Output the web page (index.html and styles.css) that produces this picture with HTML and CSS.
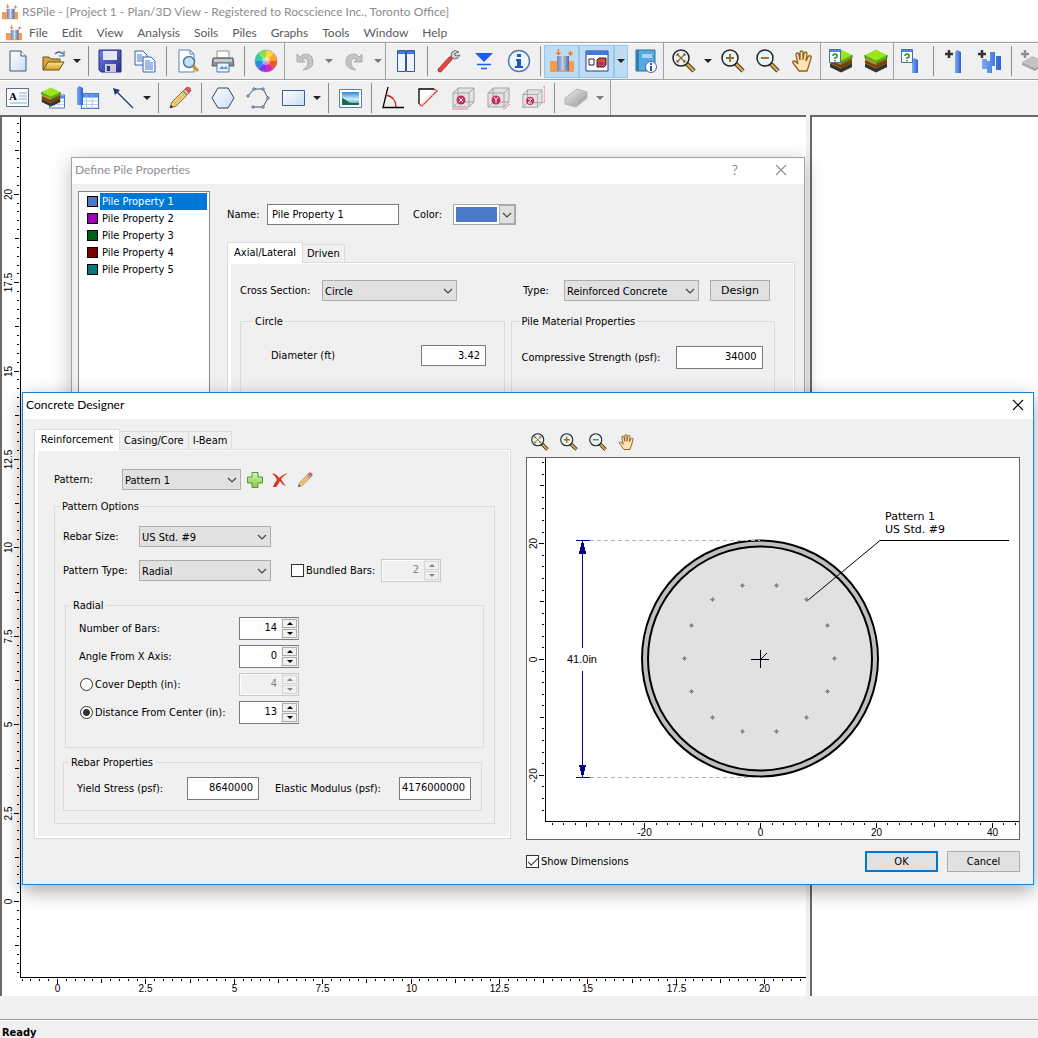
FILE: index.html
```html
<!DOCTYPE html>
<html lang="en">
<head>
<meta charset="utf-8">
<title>RSPile</title>
<link rel="stylesheet" href="styles.css">
</head>
<body>
<svg class="defs" aria-hidden="true">
  <defs>
    <linearGradient id="g-paper" x1="0" y1="0" x2="1" y2="1"><stop offset="0" stop-color="#fff"/><stop offset="1" stop-color="#c9dcf2"/></linearGradient>
    <linearGradient id="g-folder" x1="0" y1="0" x2="0" y2="1"><stop offset="0" stop-color="#fbe59a"/><stop offset="1" stop-color="#d59a1c"/></linearGradient>
    <linearGradient id="g-blue" x1="0" y1="0" x2="1" y2="1"><stop offset="0" stop-color="#6f7fe8"/><stop offset="1" stop-color="#2b2d8c"/></linearGradient>
    <linearGradient id="g-pile" x1="0" y1="0" x2="1" y2="0"><stop offset="0" stop-color="#6b86bb"/><stop offset=".5" stop-color="#b9c6e0"/><stop offset="1" stop-color="#4d689f"/></linearGradient>
    <linearGradient id="g-bar" x1="0" y1="0" x2="1" y2="0"><stop offset="0" stop-color="#7eaaf5"/><stop offset="1" stop-color="#2c62d0"/></linearGradient>
    <linearGradient id="g-sky" x1="0" y1="0" x2="0" y2="1"><stop offset="0" stop-color="#2a86d8"/><stop offset=".55" stop-color="#cdeefa"/><stop offset="1" stop-color="#2b9a9a"/></linearGradient>
    <linearGradient id="g-green" x1="0" y1="0" x2="0" y2="1"><stop offset="0" stop-color="#d8f0bd"/><stop offset="1" stop-color="#8cc63e"/></linearGradient>
    <linearGradient id="g-grey" x1="0" y1="0" x2="1" y2="1"><stop offset="0" stop-color="#f2f2f2"/><stop offset="1" stop-color="#8e8e8e"/></linearGradient>

    <symbol id="i-logo" viewBox="0 0 24 24">
      <path d="M0 12h7v9h12v-9h5v11H0z" fill="#f79a4b"/>
      <path d="M7 7h5v15H7zM13 7h6v15h-6z" fill="url(#g-pile)"/>
      <path d="M8.500 0v5M23 4.500h-3" stroke="#ef7d22" stroke-width="1.300"/><path d="M5.500 3.500h6l-3 3zM18 4.500l3-3v6z" fill="#ef7d22"/>
    </symbol>
    <symbol id="i-new" viewBox="0 0 24 24"><path d="M4 2h11l5 5v15H4z" fill="url(#g-paper)" stroke="#3f5878"/><path d="M15 2v5h5" fill="#fff" stroke="#3f5878"/></symbol>
    <symbol id="i-open" viewBox="0 0 24 24">
      <path d="M2 21V8h6l2 2h9v3" fill="#d8a63c" stroke="#6b4f14"/><path d="M2 21l5-8h16l-5 8z" fill="url(#g-folder)" stroke="#6b4f14"/>
      <path d="M14 5q4-4 8 0M23 2v5h-5" fill="none" stroke="#4b6a92" stroke-width="1.200"/>
    </symbol>
    <symbol id="i-save" viewBox="0 0 24 24"><path d="M1 1h22v22H3l-2-2z" fill="url(#g-blue)" stroke="#24307a"/><path d="M5 2h14v9H5z" fill="#e3e8f8"/><path d="M7 15h11v8H7z" fill="#c4c9dd"/><path d="M9 17h3v5H9z" fill="#2a2f80"/></symbol>
    <symbol id="i-copy" viewBox="0 0 24 24">
      <g stroke="#3d67a8" fill="#f4f8ff"><path d="M2 2h8l4 4v10H2z"/><path d="M10 8h8l4 4v11H10z"/></g>
      <path d="M4 6h5M4 8h7M4 10h6M4 12h6M12 12h5M12 14h8M12 16h8M12 18h8M12 20h8" stroke="#4b7bd0"/>
    </symbol>
    <symbol id="i-preview" viewBox="0 0 24 24">
      <path d="M3 1h11l4 4v18H3z" fill="#fdfeff" stroke="#5b83b8"/><path d="M14 1v4h4" fill="none" stroke="#5b83b8"/>
      <circle cx="13" cy="13" r="5.500" fill="#bfe2f5" stroke="#54779c" stroke-width="1.500"/><path d="M17 17l5 5" stroke="#c9952e" stroke-width="3"/>
    </symbol>
    <symbol id="i-print" viewBox="0 0 24 24">
      <path d="M6 2h12v7H6z" fill="#fff" stroke="#8f8f8f"/><path d="M2 9h20l1 8H1z" fill="#8f8f8f" stroke="#5d5d5d"/><path d="M3 10h18v3H3z" fill="#c9c9c9"/>
      <path d="M6 14h12v9H6z" fill="#eaf4ff" stroke="#4c79b5"/><path d="M8 20l3-3 2 2 2-2 2 3z" fill="#4e9bd8"/>
    </symbol>
    <symbol id="i-wheel" viewBox="0 0 24 24">
      <g><path d="M12 12L12 1A11 11 0 0 1 19.800 4.200z" fill="#ffd84a"/><path d="M12 12L19.800 4.200A11 11 0 0 1 23 12z" fill="#ffa630"/><path d="M12 12L23 12A11 11 0 0 1 19.800 19.800z" fill="#f4512c"/><path d="M12 12L19.800 19.800A11 11 0 0 1 12 23z" fill="#d22bb0"/><path d="M12 12L12 23A11 11 0 0 1 4.200 19.800z" fill="#7a3cf0"/><path d="M12 12L4.200 19.800A11 11 0 0 1 1 12z" fill="#2e86f0"/><path d="M12 12L1 12A11 11 0 0 1 4.200 4.200z" fill="#2ccfa6"/><path d="M12 12L4.200 4.200A11 11 0 0 1 12 1z" fill="#8be04a"/></g>
      <circle cx="12" cy="12" r="4" fill="#fff" opacity=".45"/><circle cx="12" cy="12" r="11" fill="none" stroke="#8a8a8a" opacity=".5"/>
    </symbol>
    <symbol id="i-undo" viewBox="0 0 24 24"><path d="M4 5v8h8l-3-3q6-2 6 4 0 4-5 7 10-1 10-8 0-8-8-8-3 0-5 3z" fill="#c4c4c4" stroke="#adadad"/></symbol>
    <symbol id="i-redo" viewBox="0 0 24 24"><path d="M20 5v8h-8l3-3q-6-2-6 4 0 4 5 7-10-1-10-8 0-8 8-8 3 0 5 3z" fill="#c4c4c4" stroke="#adadad"/></symbol>
    <symbol id="i-panes" viewBox="0 0 24 24"><path d="M3.500 1.500h8v21h-8zM12.500 1.500h8v21h-8z" fill="#eef4fd" stroke="#3a588f"/><path d="M4 2h7v3H4zM13 2h7v3h-7z" fill="#3f78e0"/></symbol>
    <symbol id="i-wrench" viewBox="0 0 24 24"><path d="M13 10l5-5" stroke="#8b8b8b" stroke-width="3"/><path d="M22 3q-4-3-7 0-2 3 0 6 3 2 6 0 1-1 2-3l-4 1-2-2z" fill="#d0d0d0" stroke="#6e6e6e"/><path d="M3 21L13 10" stroke="#b02a2a" stroke-width="4.500" stroke-linecap="round"/><path d="M3 21L13 10" stroke="#e8483f" stroke-width="3" stroke-linecap="round"/></symbol>
    <symbol id="i-level" viewBox="0 0 24 24"><path d="M3 4h18l-9 9z" fill="#1c5cf0"/><path d="M5 15.500h14M9 19.500h6" stroke="#1c5ce0" stroke-width="1.300"/></symbol>
    <symbol id="i-info" viewBox="0 0 24 24"><circle cx="12" cy="12" r="10.500" fill="#eef6ff" stroke="#5577b0" stroke-width="1.500"/><path d="M10 5h4v3h-4zM9 10h5v7h2v2H8v-2h2v-5H9z" fill="#2256b8"/></symbol>
    <symbol id="i-view" viewBox="0 0 24 24"><path d="M1 2h22v20H1z" fill="#fff" stroke="#23407e"/><path d="M1 2h22v4H1z" fill="#3f78e0"/><path d="M4 10h5v6H4z" fill="#fff" stroke="#222"/><path d="M12 11l2-2h7v7l-2 2h-7z" fill="#e04a2a" stroke="#222"/><path d="M14 13h4v3h-4z" fill="#7b2be0"/></symbol>
    <symbol id="i-book" viewBox="0 0 24 24"><path d="M2 1h19v21H2z" fill="#55abdf" stroke="#2b6f9e"/><path d="M2 1h3v21H2z" fill="#2f7fb5"/><path d="M8 5h10v4H8z" fill="#a9d6f0"/><circle cx="17" cy="18" r="5.500" fill="#fff" stroke="#4a6ea5"/><path d="M16 14h2v2h-2zM16 17h2v5h-2z" fill="#2256b8"/></symbol>
    <symbol id="i-lens" viewBox="0 0 24 24"><path d="M14 14l8 8" stroke="#1f1f1f" stroke-width="4.500"/><path d="M15 15l7 7" stroke="#d9a94a" stroke-width="2.500"/><circle cx="9" cy="9" r="8" fill="#e6f6f8" stroke="#222" stroke-width="1.500"/></symbol>
    <symbol id="i-zoom-in" viewBox="0 0 24 24"><use href="#i-lens"/><path d="M5 9h8M9 5v8" stroke="#9a6a1e" stroke-width="1.800"/></symbol>
    <symbol id="i-zoom-out" viewBox="0 0 24 24"><use href="#i-lens"/><path d="M5 9h8" stroke="#9a6a1e" stroke-width="1.800"/></symbol>
    <symbol id="i-zoom-fit" viewBox="0 0 24 24"><use href="#i-lens"/><path d="M5 5l8 8M13 5l-8 8" stroke="#9a6a1e" stroke-width="1.300"/><path d="M5 7V5h2M11 5h2v2M13 11v2h-2M7 13H5v-2" fill="none" stroke="#7c5415"/></symbol>
    <symbol id="i-hand" viewBox="0 0 24 24"><path d="M8 22q-3-4-6-8-1-2 1-2 2 0 4 3L5 6q0-2 1-2 2 0 2 2l1 5V4q0-2 2-2 1 0 1 2v7l1-6q0-2 2-2 1 0 1 2l-1 7 2-4q1-2 2-1 2 0 1 2l-2 7-2 6z" fill="#fbe2b8" stroke="#94611c" stroke-width="1.300"/></symbol>
    <symbol id="i-soil" viewBox="0 0 24 24">
      <path d="M1 6l11 5v12L1 18z" fill="#c58f2e"/><path d="M12 11l11-5v12l-11 5z" fill="#8e5d14"/>
      <path d="M1 11l11 5 11-5v3l-11 5-11-5z" fill="#6e450d"/><path d="M1 14.500l11 5 11-5V18l-11 5.500L1 18z" fill="#333"/>
      <path d="M1 6v3l11 5 11-5V6l-11 5z" fill="#57b21a"/><path d="M12 .5L1 6l11 5.500L23 6z" fill="#9be61a"/><path d="M1 9v-3M23 9V6" stroke="#2f7a10"/>
    </symbol>
    <symbol id="i-help" viewBox="0 0 12 14"><path d="M.5.5h11v13H.5z" fill="#fff" stroke="#4a6ea5"/><path d="M1 1h10v2H1z" fill="#4b86ea"/><path d="M4 7q0-2 2-2t2 2-2 2v1M6 11v1.500" fill="none" stroke="#0e8f2a" stroke-width="1.500"/></symbol>
    <symbol id="i-soil-help" viewBox="0 0 24 24"><use href="#i-soil"/><use href="#i-help" width="12" height="14"/></symbol>
    <symbol id="i-pile-help" viewBox="0 0 24 24"><path d="M12 11l2-2 4 2v13h-6z" fill="url(#g-bar)"/><use href="#i-help" x="1" width="12" height="14"/></symbol>
    <symbol id="i-pile-add" viewBox="0 0 24 24"><path d="M2 5h8M6 1v8" stroke="#333" stroke-width="2.500"/><path d="M12 3l2-2 4 2v21h-6z" fill="url(#g-bar)"/></symbol>
    <symbol id="i-piles-add" viewBox="0 0 24 24"><path d="M0 5h8M4 1v8" stroke="#333" stroke-width="2.500"/><path d="M4 10h5v10H4zM9 12h5v12H9zM12 3h5v14h-5zM18 7h5v14h-5z" fill="url(#g-bar)"/></symbol>
    <symbol id="i-slab" viewBox="0 0 24 24"><path d="M1 13l10-6 13 5-10 7z" fill="#c4c4c4"/><path d="M1 13v3l13 6 10-7v-3l-10 7z" fill="#a8a8a8"/><path d="M0 5h8M4 1v8" stroke="#8f8f8f" stroke-width="2.500"/></symbol>

    <symbol id="i-text" viewBox="0 0 24 24"><path d="M.5 2.500h22v18H.5z" fill="#f9fbff" stroke="#5b6d8c"/><text x="3" y="14" class="icon-letter">A</text><path d="M13 7h8M13 10h8M13 13h8M4 17h17" stroke="#8fa9cf"/></symbol>
    <symbol id="i-grid" viewBox="0 0 16 14"><path d="M.5.5h15v13H.5z" fill="#fff" stroke="#4a78c4"/><path d="M1 1h14v3H1z" fill="#4f8df0"/><path d="M1 7h14M1 10h14M5 1v13M10 1v13" stroke="#9dbce8" stroke-width=".7"/></symbol>
    <symbol id="i-soil-grid" viewBox="0 0 24 24"><use href="#i-grid" x="8" y="8" width="16" height="15"/><use href="#i-soil" y="1" width="20" height="20"/></symbol>
    <symbol id="i-pile-grid" viewBox="0 0 24 24"><use href="#i-grid" x="4" y="7" width="20" height="16"/><path d="M1 2l2-2 4 2v17H1z" fill="url(#g-bar)"/></symbol>
    <symbol id="i-arrow" viewBox="0 0 24 24"><path d="M4 4l18 18" stroke="#1f3a6c" stroke-width="1.300"/><path d="M2 2l7 2-5 5z" fill="#1f3a6c"/></symbol>
    <symbol id="i-pencil" viewBox="0 0 24 24"><path d="M2 22l2-6L17 3l4 4L8 20z" fill="#f6cf7c" stroke="#8a6a34"/><path d="M6 18L18 6" stroke="#d9a94e"/><path d="M17 3l2-2q4 0 4 4l-2 2z" fill="#d9575c" stroke="#9a7070"/><path d="M15 5l4 4" stroke="#8fa2a8" stroke-width="2"/><path d="M2 22l1-3 2 2z" fill="#222"/></symbol>
    <symbol id="i-hex" viewBox="0 0 24 24"><path d="M7 2h10l6 10-6 10H7L1 12z" fill="url(#g-paper)" stroke="#33465f"/></symbol>
    <symbol id="i-poly" viewBox="0 0 24 24"><path d="M2 10L8 3h9l5 9-5 9H7" fill="none" stroke="#3c5575"/><g fill="#fff" stroke="#3c5575" stroke-width=".8"><path d="M1 9h2v2H1zM7 2h2v2H7zM16 2h2v2h-2zM21 11h2v2h-2zM16 20h2v2h-2zM6 20h2v2H6z"/></g></symbol>
    <symbol id="i-rect" viewBox="0 0 24 24"><path d="M1.500 4.500h22v15h-22z" fill="url(#g-paper)" stroke="#3c5f8c"/></symbol>
    <symbol id="i-image" viewBox="0 0 24 24"><path d="M1.500 3.500h22v18h-22z" fill="#fff" stroke="#5b7fae"/><path d="M4 6h17v13H4z" fill="url(#g-sky)"/><path d="M4 12l4 2 4 3 9 0v2H4z" fill="#176a52"/></symbol>
    <symbol id="i-angle" viewBox="0 0 24 24"><path d="M7 1L2 21.500h21" fill="none" stroke="#000" stroke-width="1.300"/><path d="M5 9q10 2 10 12" fill="none" stroke="#e01818" stroke-width="1.300"/></symbol>
    <symbol id="i-tri" viewBox="0 0 24 24"><path d="M3 18V3h15z" fill="#fff"/><path d="M3 18V3h15" fill="none" stroke="#000" stroke-width="1.300"/><path d="M18 3l3 2L6 20l-3-2" fill="none" stroke="#e01818" stroke-width="1.300" stroke-dasharray="2 .6"/></symbol>
    <symbol id="i-cube" viewBox="0 0 24 24"><path d="M2 7l5-5h16v14l-5 5H2z" fill="#e2e2e2" stroke="#a3a3a3"/><path d="M2 7h16v14M18 7l5-5M7 2v14L2 21M7 16h16" fill="none" stroke="#a3a3a3"/><circle cx="10" cy="14" r="4.500" fill="#c72a5c"/></symbol>
    <symbol id="i-x" viewBox="0 0 24 24"><use href="#i-cube"/><path d="M8 12l4 4M12 12l-4 4" stroke="#fff"/><path d="M1 23h16" stroke="#ef7da0"/></symbol>
    <symbol id="i-y" viewBox="0 0 24 24"><use href="#i-cube"/><path d="M8 11l2 3 2-3M10 14v3" fill="none" stroke="#fff"/><path d="M17 24l7-6" stroke="#ef7da0"/></symbol>
    <symbol id="i-z" viewBox="0 0 24 24"><use href="#i-cube" y="2" width="22" height="22"/><path d="M7 13h4l-4 4h4" fill="none" stroke="#fff"/><path d="M24 1v15M22 1h3M22 16h3" stroke="#ef7da0"/></symbol>
    <symbol id="i-eraser" viewBox="0 0 24 24"><path d="M1 12L13 3l10 3v6L12 21 1 18z" fill="url(#g-grey)" stroke="#b4b4b4"/><path d="M1 12l11 3 11-9M12 15v6" fill="none" stroke="#c4c4c4"/></symbol>
    <symbol id="i-plus" viewBox="0 0 16 16"><path d="M5 .5h6V5h4.500v6H11v4.500H5V11H.5V5H5z" fill="url(#g-green)" stroke="#4c9a35"/></symbol>
    <symbol id="i-delete" viewBox="0 0 16 16"><path d="M0 2q3-2 7 4 4-4 9-5-5 3-7 6 2 4 5 7-4-1-6-5-2 4-4 6H1q1-4 4-7Q3 3 0 2z" fill="#dd3322"/></symbol>
    <symbol id="i-down" viewBox="0 0 8 4"><path d="M0 0h8L4 4z" fill="currentColor"/></symbol>
    <symbol id="i-up" viewBox="0 0 8 4"><path d="M0 4h8L4 0z" fill="currentColor"/></symbol>
    <symbol id="i-chevron" viewBox="0 0 10 6"><path d="M1 1l4 4 4-4" fill="none" stroke="#444" stroke-width="1.200"/></symbol>
    <symbol id="i-close" viewBox="0 0 12 12"><path d="M1 1l10 10M11 1L1 11" stroke="currentColor" stroke-width="1.100"/></symbol>
  </defs>
</svg>

<div class="app">
  <header class="titlebar">
    <svg class="logo"><use href="#i-logo"/></svg>
    <span>RSPile - [Project 1 - Plan/3D View - Registered to Rocscience Inc., Toronto Office]</span>
  </header>
  <nav class="menubar">
    <svg class="logo"><use href="#i-logo"/></svg>
    <a href="#file">File</a><a href="#edit">Edit</a><a href="#view">View</a><a href="#analysis">Analysis</a><a href="#soils">Soils</a><a href="#piles">Piles</a><a href="#graphs">Graphs</a><a href="#tools">Tools</a><a href="#window">Window</a><a href="#help">Help</a>
  </nav>

  <div class="toolbar">
    <div class="tools tools-first">
      <button class="tool" aria-label="New"><svg><use href="#i-new"/></svg></button>
      <button class="tool" aria-label="Open"><svg><use href="#i-open"/></svg></button>
      <button class="drop" aria-label="Recent files"><svg><use href="#i-down"/></svg></button>
      <i class="sep"></i>
      <button class="tool" aria-label="Save"><svg><use href="#i-save"/></svg></button>
      <button class="tool" aria-label="Copy"><svg><use href="#i-copy"/></svg></button>
      <i class="sep"></i>
      <button class="tool" aria-label="Print preview"><svg><use href="#i-preview"/></svg></button>
      <button class="tool" aria-label="Print"><svg><use href="#i-print"/></svg></button>
      <i class="sep"></i>
      <button class="tool" aria-label="Display options"><svg><use href="#i-wheel"/></svg></button>
    </div>
    <div class="tools">
      <button class="tool" aria-label="Undo"><svg><use href="#i-undo"/></svg></button>
      <button class="drop dim" aria-label="Undo list"><svg><use href="#i-down"/></svg></button>
      <button class="tool" aria-label="Redo"><svg><use href="#i-redo"/></svg></button>
      <button class="drop dim" aria-label="Redo list"><svg><use href="#i-down"/></svg></button>
    </div>
    <div class="tools">
      <button class="tool" aria-label="Tile"><svg><use href="#i-panes"/></svg></button>
      <i class="sep"></i>
      <button class="tool" aria-label="Settings"><svg><use href="#i-wrench"/></svg></button>
      <button class="tool" aria-label="Groundwater"><svg><use href="#i-level"/></svg></button>
      <button class="tool" aria-label="Info"><svg><use href="#i-info"/></svg></button>
      <i class="sep"></i>
      <button class="tool on" aria-label="Piles mode"><svg><use href="#i-logo"/></svg></button>
      <button class="tool on" aria-label="3D view"><svg><use href="#i-view"/></svg></button>
      <button class="drop on" aria-label="View list"><svg><use href="#i-down"/></svg></button>
      <button class="tool" aria-label="Report"><svg><use href="#i-book"/></svg></button>
    </div>
    <div class="tools">
      <button class="tool" aria-label="Zoom all"><svg><use href="#i-zoom-fit"/></svg></button>
      <button class="drop" aria-label="Zoom list"><svg><use href="#i-down"/></svg></button>
      <button class="tool" aria-label="Zoom in"><svg><use href="#i-zoom-in"/></svg></button>
      <button class="tool" aria-label="Zoom out"><svg><use href="#i-zoom-out"/></svg></button>
      <button class="tool" aria-label="Pan"><svg><use href="#i-hand"/></svg></button>
    </div>
    <div class="tools">
      <button class="tool" aria-label="Define soils"><svg><use href="#i-soil-help"/></svg></button>
      <button class="tool" aria-label="Soil layers"><svg><use href="#i-soil"/></svg></button>
    </div>
    <div class="tools tools-last">
      <button class="tool" aria-label="Define piles"><svg><use href="#i-pile-help"/></svg></button>
      <i class="sep"></i>
      <button class="tool" aria-label="Add pile"><svg><use href="#i-pile-add"/></svg></button>
      <button class="tool" aria-label="Add pile grid"><svg><use href="#i-piles-add"/></svg></button>
      <i class="sep"></i>
      <button class="tool" aria-label="Add cap"><svg><use href="#i-slab"/></svg></button>
    </div>
  </div>

  <div class="toolbar">
    <div class="tools tools-first tools-second">
      <button class="tool" aria-label="Text box"><svg><use href="#i-text"/></svg></button>
      <button class="tool" aria-label="Soil table"><svg><use href="#i-soil-grid"/></svg></button>
      <button class="tool" aria-label="Pile table"><svg><use href="#i-pile-grid"/></svg></button>
      <button class="tool" aria-label="Arrow"><svg><use href="#i-arrow"/></svg></button>
      <button class="drop" aria-label="Line list"><svg><use href="#i-down"/></svg></button>
      <i class="sep"></i>
      <button class="tool" aria-label="Draw"><svg><use href="#i-pencil"/></svg></button>
      <i class="sep"></i>
      <button class="tool" aria-label="Polygon"><svg><use href="#i-hex"/></svg></button>
      <button class="tool" aria-label="Polyline"><svg><use href="#i-poly"/></svg></button>
      <button class="tool" aria-label="Rectangle"><svg><use href="#i-rect"/></svg></button>
      <button class="drop" aria-label="Shape list"><svg><use href="#i-down"/></svg></button>
      <i class="sep"></i>
      <button class="tool" aria-label="Image"><svg><use href="#i-image"/></svg></button>
      <i class="sep"></i>
      <button class="tool" aria-label="Angle"><svg><use href="#i-angle"/></svg></button>
      <button class="tool" aria-label="Dimension"><svg><use href="#i-tri"/></svg></button>
      <button class="tool" aria-label="X dimension"><svg><use href="#i-x"/></svg></button>
      <button class="tool" aria-label="Y dimension"><svg><use href="#i-y"/></svg></button>
      <button class="tool" aria-label="Z dimension"><svg><use href="#i-z"/></svg></button>
      <i class="sep"></i>
      <button class="tool" aria-label="Erase"><svg><use href="#i-eraser"/></svg></button>
      <button class="drop dim" aria-label="Erase list"><svg><use href="#i-down"/></svg></button>
    </div>
  </div>

  <main class="workspace">
    <section class="pane pane-plan"><svg class="plan" id="plan"></svg></section>
    <section class="pane pane-3d"></section>
  </main>
  <div class="dock"></div>
  <footer class="status">Ready</footer>

  <section class="dialog dialog-piles" aria-label="Define Pile Properties">
    <header class="dialog-title">
      <h2>Define Pile Properties</h2>
      <button class="caption-btn" aria-label="Help">?</button>
      <button class="caption-btn" aria-label="Close"><svg><use href="#i-close"/></svg></button>
    </header>
    <div class="piles-body">
      <ul class="listbox">
        <li class="selected"><i class="swatch blue"></i><span>Pile Property 1</span></li>
        <li><i class="swatch purple"></i><span>Pile Property 2</span></li>
        <li><i class="swatch green"></i><span>Pile Property 3</span></li>
        <li><i class="swatch red"></i><span>Pile Property 4</span></li>
        <li><i class="swatch teal"></i><span>Pile Property 5</span></li>
      </ul>
      <div class="piles-main">
        <div class="row name-row">
          <label class="w40" for="name">Name:</label>
          <input class="field name-field" id="name" value="Pile Property 1">
          <label class="w40" for="color">Color:</label>
          <button class="color" id="color"><span class="color-chip"></span><span class="color-drop"><svg class="chev"><use href="#i-chevron"/></svg></span></button>
        </div>
        <div class="tabs"><button class="tab active tab-axial">Axial/Lateral</button><button class="tab">Driven</button></div>
        <div class="panel piles-panel">
          <div class="row">
            <label class="w82" for="section">Cross Section:</label>
            <span class="combo c135"><select id="section"><option>Circle</option></select><svg class="chev"><use href="#i-chevron"/></svg></span>
            <label class="type-label" for="type">Type:</label>
            <span class="combo c135"><select id="type"><option>Reinforced Concrete</option></select><svg class="chev"><use href="#i-chevron"/></svg></span>
            <button class="btn design">Design</button>
          </div>
          <div class="pile-groups">
            <fieldset class="group wide"><legend>Circle</legend>
              <div class="row circle-row"><label class="w150" for="dia">Diameter (ft)</label><input class="field num short" id="dia" value="3.42"></div>
            </fieldset>
            <fieldset class="group material"><legend>Pile Material Properties</legend>
              <div class="row material-row"><label class="w154" for="strength">Compressive Strength (psf):</label><input class="field num tall w87" id="strength" value="34000"></div>
            </fieldset>
          </div>
        </div>
      </div>
    </div>
  </section>

  <section class="dialog dialog-concrete" aria-label="Concrete Designer">
    <header class="dialog-title">
      <h2>Concrete Designer</h2>
      <button class="caption-btn" aria-label="Close"><svg><use href="#i-close"/></svg></button>
    </header>
    <div class="concrete-body">
      <div class="concrete-form">
        <div class="tabs"><button class="tab active tab-reinf">Reinforcement</button><button class="tab">Casing/Core</button><button class="tab">I-Beam</button></div>
        <div class="panel concrete-panel">
          <div class="row">
            <label class="w68" for="pattern">Pattern:</label>
            <span class="combo c119"><select id="pattern"><option>Pattern 1</option></select><svg class="chev"><use href="#i-chevron"/></svg></span>
            <span class="pattern-tools">
              <button aria-label="Add"><svg><use href="#i-plus"/></svg></button>
              <button aria-label="Delete"><svg><use href="#i-delete"/></svg></button>
              <button aria-label="Rename"><svg><use href="#i-pencil"/></svg></button>
            </span>
          </div>
          <fieldset class="group options"><legend>Pattern Options</legend>
            <div class="options-rows">
              <div class="row">
                <label class="w76" for="rebar">Rebar Size:</label>
                <span class="combo c132"><select id="rebar"><option>US Std. #9</option></select><svg class="chev"><use href="#i-chevron"/></svg></span>
              </div>
              <div class="row">
                <label class="w76" for="ptype">Pattern Type:</label>
                <span class="combo c132"><select id="ptype"><option>Radial</option></select><svg class="chev"><use href="#i-chevron"/></svg></span>
                <label class="check bundled"><input type="checkbox">Bundled Bars:</label>
                <span class="spin off"><input type="number" value="2" disabled aria-label="Bundled bars"><span class="spin-btns"><button disabled aria-label="Up"><svg><use href="#i-up"/></svg></button><button disabled aria-label="Down"><svg><use href="#i-down"/></svg></button></span></span>
              </div>
            </div>
            <fieldset class="group radial"><legend>Radial</legend>
              <div class="radial-rows">
                <div class="row"><label class="w160" for="bars">Number of Bars:</label><span class="spin"><input type="number" id="bars" value="14"><span class="spin-btns"><button aria-label="Up"><svg><use href="#i-up"/></svg></button><button aria-label="Down"><svg><use href="#i-down"/></svg></button></span></span></div>
                <div class="row"><label class="w160" for="angle">Angle From X Axis:</label><span class="spin"><input type="number" id="angle" value="0"><span class="spin-btns"><button aria-label="Up"><svg><use href="#i-up"/></svg></button><button aria-label="Down"><svg><use href="#i-down"/></svg></button></span></span></div>
                <div class="row"><label class="check w160"><input type="radio" name="place">Cover Depth (in):</label><span class="spin off"><input type="number" value="4" disabled aria-label="Cover depth"><span class="spin-btns"><button disabled aria-label="Up"><svg><use href="#i-up"/></svg></button><button disabled aria-label="Down"><svg><use href="#i-down"/></svg></button></span></span></div>
                <div class="row"><label class="check w160"><input type="radio" name="place" checked>Distance From Center (in):</label><span class="spin"><input type="number" value="13" aria-label="Distance from center"><span class="spin-btns"><button aria-label="Up"><svg><use href="#i-up"/></svg></button><button aria-label="Down"><svg><use href="#i-down"/></svg></button></span></span></div>
              </div>
            </fieldset>
            <fieldset class="group rebar"><legend>Rebar Properties</legend>
              <div class="row rebar-row">
                <label class="w110" for="yield">Yield Stress (psf):</label><input class="field num tall w72" id="yield" value="8640000">
                <label class="elastic" for="elastic">Elastic Modulus (psf):</label><input class="field num tall w72" id="elastic" value="4176000000">
              </div>
            </fieldset>
          </fieldset>
        </div>
      </div>
      <div class="concrete-view">
        <div class="view-tools">
          <button aria-label="Zoom all"><svg><use href="#i-zoom-fit"/></svg></button>
          <button aria-label="Zoom in"><svg><use href="#i-zoom-in"/></svg></button>
          <button aria-label="Zoom out"><svg><use href="#i-zoom-out"/></svg></button>
          <button aria-label="Pan"><svg><use href="#i-hand"/></svg></button>
        </div>
        <div class="canvas">
          <svg id="section-view" viewBox="0 0 492 381" preserveAspectRatio="xMinYMin meet">
            <circle cx="233" cy="200.500" r="118" fill="#bfbfbf" stroke="#000" stroke-width="2"/>
            <circle cx="233" cy="200.500" r="112" fill="#e1e1e1" stroke="#000" stroke-width="2"/>
            <path d="M63 82.500h170M63 319.500h170" stroke="#b4b4b4" stroke-dasharray="4 3"/>
            <g stroke="#000080" fill="#000080" shape-rendering="crispEdges">
              <path d="M49 82.500h14M49 319.500h14M55.500 83v107M55.500 213v106"/>
              <path d="M55.500 83l3 12h-6zM55.500 319l3-12h-6z"/>
            </g>
            <text class="dim-text" x="55" y="205" text-anchor="middle">41.0in</text>
            <path d="M224 201.500h18M233.500 192v18" stroke="#000"/><path d="M234 201l6-6" stroke="#000080"/>
            <path d="M280 143L353 82.500h129" fill="none" stroke="#000"/>
            <text class="note" x="358" y="62">Pattern 1</text>
            <text class="note" x="358" y="75">US Std. #9</text>
          </svg>
        </div>
        <div class="concrete-foot">
          <label class="check"><input type="checkbox" checked>Show Dimensions</label>
          <button class="btn default">OK</button>
          <button class="btn">Cancel</button>
        </div>
      </div>
    </div>
  </section>
</div>
<script src="script.js"></script>
</body>
</html>
```
FILE: styles.css
```css
* { box-sizing: border-box; }
body {
  margin: 0;
  background: #f0f0f0;
  color: #000;
  font: 11px/13px "DejaVu Sans Condensed", "DejaVu Sans", sans-serif;
}
button, input, select { font: inherit; color: inherit; margin: 0; padding: 0; border: 0; background: none; border-radius: 0; }
svg { display: block; }
.defs { position: absolute; width: 0; height: 0; }
.icon-letter { font: bold 11px "Liberation Serif", serif; }

.app { position: relative; display: flex; flex-direction: column; height: 100vh; overflow: hidden; }
.titlebar, .menubar { display: flex; align-items: center; background: #fff; font: 12px/16px Lato, sans-serif; }
.titlebar { height: 24px; padding-left: 2px; gap: 4px; color: #8c8c8c; flex: none; }
.logo { width: 16px; height: 16px; flex: none; }
.menubar { height: 18px; padding-left: 6px; color: #5a5a5a; flex: none; }
.menubar a { color: inherit; text-decoration: none; padding: 0 7px; }

.toolbar { flex: none; display: flex; height: 36px; border-top: 1px solid #a0a0a0; box-shadow: inset 0 1px 0 #fff; overflow: hidden; }
.menubar + .toolbar { height: 37px; }
.menubar { border-bottom: 1px solid #f0f0f0; }
.tools { display: flex; align-items: center; flex: none; padding-left: 2px; border-right: 1px solid #a0a0a0; }
.tools-first { padding-left: 0; padding-right: 1px; }
.tools-second { padding-right: 3px; }
.tools-last { border-right: 0; padding-left: 0; }
.tool { width: 35px; height: 33px; display: grid; place-items: center; flex: none; }
.tool svg { width: 24px; height: 24px; overflow: visible; }
.drop { width: 14px; height: 33px; display: grid; place-items: center; flex: none; color: #222; }
.drop svg { width: 8px; height: 4px; }
.dim { color: #7a7a7a; }
.on { background: #bfdcf3; border: 1px solid #90c8f6; }
.sep { width: 8px; height: 30px; flex: none; background: linear-gradient(#8c8c8c, #8c8c8c) center / 1px 100% no-repeat; }

.workspace { flex: 1; display: flex; gap: 4px; min-height: 0; background: #f0f0f0; }
.pane { background: #fff; border-top: 2px solid #696969; border-left: 2px solid #696969; min-width: 0; }
.pane-plan { flex: 0 0 78%; max-width: 806px; }
.pane-3d { flex: 1; }
.plan { width: 100%; height: 100%; }
.axis-text { font: 10px "Liberation Sans", sans-serif; }
.dim-text { font: 11px "Liberation Sans", sans-serif; }
.note { font: 11px "DejaVu Sans", sans-serif; }
.dock { flex: none; height: 23px; }
.status { flex: none; height: 19px; padding: 6px 2px 0; border-top: 1px solid #a0a0a0; box-shadow: inset 0 1px 0 #fff; font-weight: bold; }

.dialog { position: absolute; background: #f0f0f0; }
.dialog-piles { left: 71px; top: 157px; width: 734px; border: 1px solid #a0a0a0; box-shadow: 0 4px 18px rgba(0,0,0,.25); }
.dialog-concrete { left: 22px; right: 4px; top: 392px; border: 1px solid #1883d7; box-shadow: 0 6px 18px rgba(0,0,0,.35); }
.dialog-title { display: flex; align-items: center; height: 26px; background: #fff; padding: 0 0 2px 3px; }
.dialog-title h2 { flex: 1; margin: 0; font: 12px/16px Lato, sans-serif; }
.dialog-piles .dialog-title { color: #8f8f8f; }
.caption-btn { width: 30px; height: 24px; display: grid; place-items: center; font: 14px/16px Lato, sans-serif; }
.caption-btn svg { width: 12px; height: 12px; }
.dialog-piles .caption-btn { width: 46px; }

.row { display: flex; align-items: center; }
.w40 { width: 40px; } .w68 { width: 68px; } .w76 { width: 76px; } .w82 { width: 82px; }
.w110 { width: 110px; } .w150 { width: 150px; } .w154 { width: 154px; } .w160 { width: 160px; }
.row > * { flex: none; }
.field { height: 21px; border: 1px solid #7a7a7a; background: #fff; padding: 0 4px; }
.num { text-align: right; padding: 0 5px 0 0; }
.tall { height: 23px; padding-bottom: 2px; }
.short { width: 65px; } .w72 { width: 72px; } .w87 { width: 87px; }
.combo { display: grid; align-items: center; height: 21px; }
.combo > * { grid-area: 1 / 1; }
.combo select { appearance: none; height: 21px; width: 100%; border: 1px solid #adadad; background: #e1e1e1; padding: 1px 2px 0; }
.chev { width: 10px; height: 6px; }
.combo .chev { justify-self: end; margin-right: 4px; pointer-events: none; }
.c119 { width: 119px; } .c132 { width: 132px; } .c135 { width: 135px; }
.btn { height: 21px; border: 1px solid #adadad; background: #e1e1e1; text-align: center; }
.check { display: flex; align-items: center; gap: 2px; }
.check input { appearance: none; width: 13px; height: 13px; border: 1px solid #333; background: #fff; flex: none; }
.check input[type="radio"] { border-radius: 50%; margin-left: 1px; }
.check input[type="radio"]:checked { background: radial-gradient(circle, #333 3px, #fff 4px); }
.check input[type="checkbox"]:checked { background: #fff; display: grid; place-items: center; }
.check input[type="checkbox"]:checked::before { content: ""; width: 9px; height: 4px; border: solid #333; border-width: 0 0 1px 1px; transform: rotate(-45deg); margin-bottom: 3px; }

.tabs { display: flex; align-items: flex-end; height: 20px; }
.tab { height: 18px; padding: 0 4px; border: 1px solid #dcdcdc; border-bottom: 0; border-left: 0; }
.tab.active { position: relative; height: 21px; margin-bottom: -1px; padding-bottom: 2px; border-left: 1px solid #dcdcdc; background: #fff; }
.tab-axial { width: 76px; } .tab-reinf { width: 86px; }
.panel { border: 1px solid #dcdcdc; box-shadow: inset 3px 1px 0 #fff, inset -1px -2px 0 #fff; }
.group { min-width: 0; margin: 0; border: 1px solid #dcdcdc; padding: 0 5px; }
.group legend { padding: 0 2px; }

.piles-body { display: flex; gap: 17px; padding: 7px 9px 7px 6px; }
.listbox { flex: none; width: 132px; margin: 0; padding: 1px 2px 1px 1px; list-style: none; border: 1px solid #828790; background: #fff; }
.listbox li { display: flex; align-items: center; gap: 2px; height: 17px; padding-left: 7px; }
.listbox span { flex: 1; padding: 2px; }
.selected span { background: #0078d7; color: #fff; }
.swatch { width: 11px; height: 11px; border: 1px solid #000; }
.blue { background: #4a7ac7; } .purple { background: #9900b0; } .green { background: #00601a; } .red { background: #780000; } .teal { background: #007878; }
.piles-main { flex: 1; padding-top: 13px; }
.name-row { margin-bottom: 17px; }
.name-field { width: 132px; margin-right: 14px; }
.color { display: flex; width: 63px; height: 21px; border: 1px solid #a6a6a6; background: #fff; }
.color-chip { flex: 1; align-self: stretch; margin: 2px; background: #4a7ac7; }
.color-drop { width: 16px; height: 19px; display: grid; place-items: center; background: #e1e1e1; border: 1px solid #adadad; }
.piles-panel { padding: 17px 19px 16px 12px; min-height: 240px; }
.type-label { margin-left: 66px; width: 41px; }
.design { width: 60px; margin-left: 11px; font-family: "DejaVu Sans", sans-serif; }
.pile-groups { display: grid; grid-template-columns: 1fr 1fr; gap: 6px; margin-top: 14px; }
.pile-groups .group { height: 150px; }
.wide { padding-left: 12px; }
.material { padding-left: 8px; }
.circle-row { padding: 17px 0 0 18px; }
.material-row { padding: 18px 0 0 2px; }

.concrete-body { display: flex; align-items: flex-start; gap: 15px; padding: 10px 13px 12px 11px; }
.concrete-form { flex: none; width: 477px; }
.concrete-panel { padding: 19px 15px 14px 19px; }
.pattern-tools { display: flex; gap: 9px; margin-left: 6px; }
.pattern-tools svg { width: 16px; height: 16px; }
.options { margin-top: 10px; padding-bottom: 12px; }
.options-rows { display: grid; gap: 12px; padding: 13px 0 0 3px; }
.bundled { margin-left: 20px; width: 90px; }
.radial { margin: 17px 5px 0; padding-bottom: 23px; }
.radial-rows { display: grid; gap: 5px; padding: 5px 0 0 8px; }
.rebar { margin: 8px 7px 0 3px; padding-bottom: 10px; }
.rebar-row { padding: 8px 0 0 8px; }
.elastic { margin-left: 16px; width: 124px; }

.spin { display: flex; width: 60px; height: 23px; border: 1px solid #7a7a7a; border-right-color: #adadad; background: #fff; }
.spin input { appearance: textfield; flex: 1; min-width: 0; text-align: right; padding: 0 4px 3px 0; }
.spin input::-webkit-inner-spin-button { display: none; }
.spin-btns { display: grid; gap: 1px; width: 17px; padding: 1px 1px; background: #f0f0f0; }
.spin-btns button { display: grid; place-items: center; border: 1px solid #adadad; background: #f0f0f0; }
.spin-btns svg { width: 6px; height: 3px; }
.spin.off { border-color: #c8c8c8; background: #f0f0f0; box-shadow: inset 0 0 0 1px #fff; color: #838383; }
.spin.off button { border-color: #d5d5d5; }

.concrete-view { flex: 1; min-width: 0; }
.view-tools { display: flex; gap: 11px; padding: 4px 5px 6px; }
.view-tools svg { width: 18px; height: 18px; }
.canvas { border: 1px solid #666; background: #fff; }
.canvas svg { width: 100%; height: 381px; }
.concrete-foot { display: flex; align-items: center; gap: 9px; margin-top: 11px; }
.concrete-foot .check { flex: 1; }
.concrete-foot .btn { width: 73px; }
.concrete-foot .default { border: 2px solid #0078d7; }
```
FILE: script.js
```js
const NS = "http://www.w3.org/2000/svg";

function add(parent, name, attrs, text) {
  const el = document.createElementNS(NS, name);
  for (const key in attrs) el.setAttribute(key, attrs[key]);
  if (text !== undefined) el.textContent = text;
  parent.appendChild(el);
}

// Draws a left and a bottom ruler. Every tenth tick is labelled, every fifth is long.
function rulers(svg, o) {
  let d = `M${o.left + 0.5} 0V${o.bottom + 0.5}H${o.width}`;
  const first = Math.ceil((o.left - o.zeroX) / o.step);
  for (let i = first; o.zeroX + i * o.step < o.width; i++) {
    const x = Math.round(o.zeroX + i * o.step) + 0.5;
    const len = i % 10 === 0 ? 5 : i % 5 === 0 ? 4 : 2;
    d += `M${x} ${o.bottom + 2}v${len}`;
    if (i % 10 === 0) add(svg, "text", { class: "axis-text", x: x, y: o.bottom + 15, "text-anchor": "middle" }, i * o.unit);
  }
  const low = Math.ceil((o.zeroY - o.bottom) / o.step);
  for (let i = low; o.zeroY - i * o.step > 4; i++) {
    const y = Math.round(o.zeroY - i * o.step) + 0.5;
    const len = i % 10 === 0 ? 5 : i % 5 === 0 ? 4 : 2;
    d += `M${o.left - 1} ${y}h${-len}`;
    if (i % 10 === 0) add(svg, "text", { class: "axis-text", "text-anchor": "middle", transform: `translate(${o.labelX} ${y}) rotate(-90)` }, i * o.unit);
  }
  add(svg, "path", { d, fill: "none", stroke: "#000", "shape-rendering": "crispEdges" });
}

function drawPlan() {
  const svg = document.getElementById("plan");
  svg.replaceChildren();
  const width = svg.clientWidth, height = svg.clientHeight;
  const bottom = height - 19;
  rulers(svg, { width, left: 18, bottom, zeroX: 55, zeroY: bottom - 76, step: 8.84, unit: 0.25, labelX: 10 });
}

const view = document.getElementById("section-view");
rulers(view, { width: 492, left: 18, bottom: 363, zeroX: 233, zeroY: 201, step: 11.58, unit: 2, labelX: 10 });
for (let i = 0; i < 14; i++) {
  const a = i * Math.PI / 7;
  const x = Math.round(232 + 75 * Math.cos(a)), y = Math.round(200 - 75 * Math.sin(a));
  add(view, "path", { d: `M${x - 2} ${y + 0.5}h5M${x + 0.5} ${y - 2}v5M${x - 1} ${y - 0.5}h3M${x - 1} ${y + 1.5}h3`, stroke: "#808080", "stroke-width": 0.8 });
}
drawPlan();
addEventListener("resize", drawPlan);
```
